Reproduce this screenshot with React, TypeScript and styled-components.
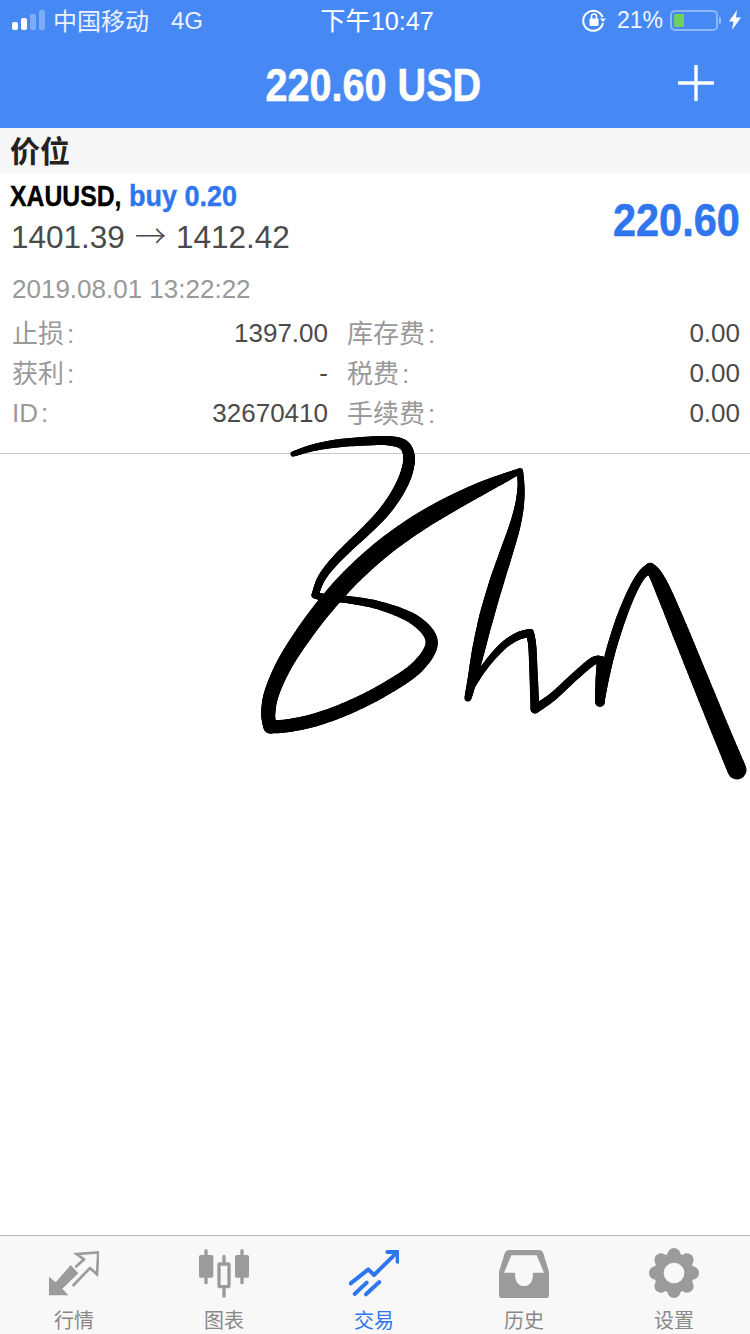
import React from "react";
import styled, { createGlobalStyle } from "styled-components";

const Global = createGlobalStyle`
  html, body { margin: 0; padding: 0; background: #fff; }
  body { font-family: "Liberation Sans", "Noto Sans CJK SC", sans-serif; }
`;
const Page = styled.div`
  position: relative; width: 750px; height: 1334px; overflow: hidden;
  display: flex; flex-direction: column; background: #fff;
`;
const Header = styled.header`
  background: #4689f5; color: #fff; height: 128px; display: flex; flex-direction: column; flex: none;
`;
const StatusBar = styled.div`
  height: 40px; display: grid; grid-template-columns: 1fr auto 1fr; align-items: center;
  padding: 0 9px 0 12px; font-size: 24px; box-sizing: border-box;
`;
const StatusLeft = styled.div`display: flex; align-items: center; gap: 8px; color: #eaf2ff;`;
const StatusRight = styled.div`display: flex; align-items: center; justify-content: flex-end; color: #f2f6ff;`;
const Time = styled.div`margin-right: -1px; font-size: 25.2px; padding-bottom: 2px;`;
const Signal = styled.div`display: flex; align-items: flex-end; gap: 3px; height: 20px;`;
const Bar = styled.i<{ $h: number; $on?: boolean }>`
  display: block; width: 6px; height: ${p => p.$h}px; border-radius: 2px;
  background: ${p => (p.$on ? "#fff" : "rgba(255,255,255,.3)")};
`;
const Carrier = styled.span`margin-right: 14px; padding-bottom: 1px;`;
const NetworkType = styled.span`padding-top: 2px;`;
const Percent = styled.span`font-size: 23px; margin: 0 8px 0 11px; padding-top: 1px;`;
const Battery = styled.div`
  width: 48px; height: 21px; border: 2px solid rgba(255,255,255,.4); border-radius: 5px;
  box-sizing: border-box; padding: 2px; position: relative; margin: 0 11px 0 -1px;
  &::after { content: ""; position: absolute; right: -5px; top: 5px; width: 2px; height: 7px; background: rgba(255,255,255,.45); border-radius: 0 2px 2px 0; }
`;
const BatteryFill = styled.div`width: 10px; height: 100%; background: #6fd15b; border-radius: 1px;`;
const NavBar = styled.div`
  flex: 1; display: flex; align-items: center; justify-content: center; position: relative; padding: 2px 4px 0 0;
`;
const Title = styled.div`
  font-size: 46px; font-weight: 700; transform: scaleX(.861); white-space: nowrap; -webkit-text-stroke: .6px #fff;
`;
const PlusIcon = styled.svg`position: absolute; right: 36px; top: 25px;`;
const SectionBar = styled.div`
  height: 45px; flex: none; background: #f6f6f6; display: flex; align-items: center; padding: 0 0 4px 10px;
  box-sizing: border-box; font-size: 30px; font-weight: 700; color: #222;
`;
const Position = styled.section`
  height: 281px; flex: none; box-sizing: border-box; border-bottom: 1px solid #c9c9c9; padding: 0 10px 0 12px;
  display: flex; flex-direction: column;
`;
const Top = styled.div`display: flex; justify-content: space-between;`;
const SymbolLine = styled.div`
  font-size: 30px; font-weight: 700; height: 44px; line-height: 45px; margin-left: -2px; white-space: nowrap;
  -webkit-text-stroke: .4px currentColor;
`;
const SymbolName = styled.span`
  display: inline-block; color: #000; transform: scaleX(.825); transform-origin: left center; margin-right: -24px;
`;
const Buy = styled.span`
  display: inline-block; color: #2f76ee; transform: scaleX(.9); transform-origin: left center;
`;
const Prices = styled.div`font-size: 31.5px; color: #4a4a4a; height: 40px; line-height: 40px; margin-left: -1px; white-space: nowrap;`;
const Arrow = styled.span`font-family: "Noto Sans CJK SC", sans-serif; font-weight: 300; line-height: 1; margin: 0 1px;`;
const Profit = styled.div`
  font-size: 46px; font-weight: 700; color: #2f76ee; transform: scaleX(.9); transform-origin: right center;
  line-height: 50px; margin-top: 22px; -webkit-text-stroke: .6px #2f76ee;
`;
const DateText = styled.div`font-size: 26px; color: #999; margin-top: 12px; height: 40px; line-height: 40px;`;
const Grid = styled.div`
  display: grid; grid-template-columns: 316px 1fr; grid-auto-rows: 40px; margin-top: 4px; align-items: center;
`;
const Pair = styled.div<{ $right?: boolean }>`
  display: flex; justify-content: space-between; align-items: center; font-size: 26px;
  ${p => (p.$right ? "margin-left: 19px;" : "")}
`;
const Label = styled.span<{ $latin?: boolean }>`
  color: #999; padding-bottom: ${p => (p.$latin ? 0 : 4)}px;
`;
const Colon = styled.span`margin-left: 3px;`;
const Value = styled.span`color: #4a4a4a;`;
const Spacer = styled.div`flex: 1;`;
const TabBar = styled.nav`
  height: 99px; flex: none; box-sizing: border-box; border-top: 1px solid #b4b4b4; background: #f8f8f8;
  display: grid; grid-template-columns: repeat(5, 150px); padding-top: 12px;
`;
const Tab = styled.div<{ $active?: boolean }>`
  display: flex; flex-direction: column; align-items: center; font-size: 20px; line-height: 24px; padding-right: 2px;
  color: ${p => (p.$active ? "#2f76ee" : "#888")};
`;
const TabIcon = styled.svg`display: block; width: 50px; height: 50px; margin-bottom: 11px;`;
const Signature = styled.svg`position: absolute; left: 0; top: 0; pointer-events: none;`;

type P = [number, number, number];
const strokes: P[][] = [
  [[293,454,5],[312,447,7],[335,443,8],[365,441,9],[392,440,9],[406,442,10],[411,456,12],[408,473,12],[398,493,12],[385,513,11],[366,531,10],[350,545,9],[332,564,9],[319,578,8],[315,595,7]],
  [[315,595,7],[322,599,7],[345,598,7],[383,604,8],[417,619,11],[445,640,12],[420,669,13],[383,691,13],[350,708,13],[317,721,13],[285,727,13],[270,727,13]],
  [[270,727,13],[267,715,14],[269,697,15],[282,663,16],[307,630,17],[327,602,18],[350,577,18],[383,546,18],[417,523,18],[450,504,17],[483,487,14],[507,477,9],[520,471,5]],
  [[520,471,6],[522,485,6],[520,505,9],[516,525,11],[507,550,13],[496,583,15],[486,617,15],[478,650,14],[472,683,9],[468,698,7]],
  [[469,692,5],[482,667,7],[505,642,7],[518,635,8],[530,633,8]],
  [[530,633,8],[533,640,8],[533,670,8],[535,709,9]],
  [[535,709,9],[550,702,8],[577,673,8],[597,656,8],[601,660,8]],
  [[601,660,8],[600,680,10],[600,702,10]],
  [[600,702,9],[604,680,9],[610,650,10],[621,617,10],[633,588,9],[642,572,8],[650,568,10]],
  [[650,568,10],[656,574,13],[662,587,16],[680,631,17],[700,680,18],[718,725,18],[737,770,19]],
];

function smooth(points: P[], times: number): P[] {
  let cur = points;
  for (let n = 0; n < times; n++) {
    cur = cur.map((p, i) => {
      if (i === 0 || i === cur.length - 1) return p;
      const a = cur[i - 1], b = cur[i + 1];
      return [
        a[0] * 0.25 + p[0] * 0.5 + b[0] * 0.25,
        a[1] * 0.25 + p[1] * 0.5 + b[1] * 0.25,
        a[2] * 0.25 + p[2] * 0.5 + b[2] * 0.25,
      ] as P;
    });
  }
  return cur;
}

function segments(input: P[]) {
  const points = smooth(input, 1);
  const out: { x1: number; y1: number; x2: number; y2: number; w: number }[] = [];
  const n = 10;
  for (let i = 0; i < points.length - 1; i++) {
    const p0 = points[Math.max(i - 1, 0)], p1 = points[i], p2 = points[i + 1], p3 = points[Math.min(i + 2, points.length - 1)];
    let px = p1[0], py = p1[1];
    for (let k = 1; k <= n; k++) {
      const t = k / n, t2 = t * t, t3 = t2 * t;
      const f = (a: number, b: number, c: number, d: number) =>
        0.5 * (2 * b + (c - a) * t + (2 * a - 5 * b + 4 * c - d) * t2 + (3 * b - a - 3 * c + d) * t3);
      const x = f(p0[0], p1[0], p2[0], p3[0]), y = f(p0[1], p1[1], p2[1], p3[1]);
      out.push({ x1: px, y1: py, x2: x, y2: y, w: p1[2] + (p2[2] - p1[2]) * t });
      px = x; py = y;
    }
  }
  return out;
}

const gray = "#9b9b9b";
const blue = "#2f76ee";

const MarketIcon = () => (
  <TabIcon viewBox="147 54 150 150">
    <path fill={gray} d="M147 140L147 196L205 196L187 176L235 130L212 105L167 157Z" />
    <path fill="none" stroke={gray} strokeWidth="8" d="M226 112L252 88L230 72L295 67L291 133L270 114L218 168" />
  </TabIcon>
);
const ChartIcon = () => (
  <TabIcon viewBox="597 54 150 150">
    <g fill={gray}>
      <rect x="613" y="58" width="10" height="105" rx="4" />
      <rect x="597" y="75" width="43" height="68" rx="5" />
      <rect x="721" y="58" width="10" height="105" rx="4" />
      <rect x="705" y="75" width="42" height="68" rx="5" />
      <rect x="667" y="75" width="10" height="128" rx="4" />
    </g>
    <rect x="657" y="102" width="30" height="68" rx="2" fill="#f8f8f8" stroke={gray} strokeWidth="10" />
  </TabIcon>
);
const TradeIcon = () => (
  <TabIcon viewBox="147 54 150 150">
    <g fill="none" stroke={blue} strokeWidth="12" strokeLinecap="round" strokeLinejoin="round">
      <path d="M152 160L205 118L222 135L288 70" />
      <path d="M262 66L293 66L293 95" />
      <path d="M164 192L200 158" />
      <path d="M198 193L238 156" />
    </g>
  </TabIcon>
);
const HistoryIcon = () => (
  <TabIcon viewBox="597 54 150 150">
    <path fill={gray} fillRule="evenodd" d="M628 60H716Q726 60 730 70L747 125V195Q747 205 737 205H607Q597 205 597 195V125L614 70Q618 60 628 60ZM634 76L612 128H645Q645 168 672 168Q699 168 699 128H732L710 76Z" />
  </TabIcon>
);
const SettingsIcon = () => (
  <TabIcon viewBox="0 0 150 150">
    <g fill={gray}>
      <circle cx="75" cy="75" r="60" />
      {[0, 45, 90, 135, 180, 225, 270, 315].map(a => (
        <circle key={a} cx={75 + 55 * Math.cos((a * Math.PI) / 180)} cy={75 + 55 * Math.sin((a * Math.PI) / 180)} r="20" />
      ))}
    </g>
    <circle cx="75" cy="75" r="31" fill="#f8f8f8" />
  </TabIcon>
);

const rows: [[string, string], [string, string]][] = [
  [["止损", "1397.00"], ["库存费", "0.00"]],
  [["获利", "-"], ["税费", "0.00"]],
  [["ID", "32670410"], ["手续费", "0.00"]],
];
const tabs = [
  { label: "行情", icon: <MarketIcon /> },
  { label: "图表", icon: <ChartIcon /> },
  { label: "交易", icon: <TradeIcon />, active: true },
  { label: "历史", icon: <HistoryIcon /> },
  { label: "设置", icon: <SettingsIcon /> },
];

export default function App() {
  return (
    <Page>
      <Global />
      <Header>
        <StatusBar>
          <StatusLeft>
            <Signal>
              <Bar $h={8} $on /><Bar $h={12} $on /><Bar $h={16} /><Bar $h={20} />
            </Signal>
            <Carrier>中国移动</Carrier>
            <NetworkType>4G</NetworkType>
          </StatusLeft>
          <Time>下午10:47</Time>
          <StatusRight>
            <svg width="24" height="24" viewBox="0 0 24 24" fill="none">
              <path d="M20.5 9A10 10 0 1 0 21 15" stroke="#fff" strokeWidth="2" />
              <path d="M18 10.5h6l-3 3.5z" fill="#fff" />
              <rect x="7.5" y="10.5" width="9" height="7.5" rx="1" fill="#fff" />
              <path d="M9.5 11V8.5a2.5 2.5 0 0 1 5 0V11" stroke="#fff" strokeWidth="1.6" />
            </svg>
            <Percent>21%</Percent>
            <Battery><BatteryFill /></Battery>
            <svg width="12" height="20" viewBox="0 0 12 20"><path d="M8 0L0 11.5H4.5L3 20L12 7.5H7Z" fill="#fff" /></svg>
          </StatusRight>
        </StatusBar>
        <NavBar>
          <Title>220.60 USD</Title>
          <PlusIcon width="36" height="36" viewBox="0 0 36 36">
            <path d="M18 0V36M0 18H36" stroke="#fff" strokeWidth="3.4" />
          </PlusIcon>
        </NavBar>
      </Header>
      <SectionBar>价位</SectionBar>
      <Position>
        <Top>
          <div>
            <SymbolLine><SymbolName>XAUUSD,</SymbolName> <Buy>buy 0.20</Buy></SymbolLine>
            <Prices>1401.39 <Arrow>→</Arrow> 1412.42</Prices>
          </div>
          <Profit>220.60</Profit>
        </Top>
        <DateText>2019.08.01 13:22:22</DateText>
        <Grid>
          {rows.map(([l, r]) => (
            <React.Fragment key={l[0]}>
              <Pair><Label $latin={l[0] === "ID"}>{l[0]}<Colon>:</Colon></Label><Value>{l[1]}</Value></Pair>
              <Pair $right><Label>{r[0]}<Colon>:</Colon></Label><Value>{r[1]}</Value></Pair>
            </React.Fragment>
          ))}
        </Grid>
      </Position>
      <Spacer />
      <TabBar>
        {tabs.map(t => (
          <Tab key={t.label} $active={t.active}>{t.icon}{t.label}</Tab>
        ))}
      </TabBar>
      <Signature width="750" height="1334" viewBox="0 0 750 1334">
        <g stroke="#000" strokeLinecap="round" fill="none">
          {strokes.flatMap((s, i) =>
            segments(s).map((g, j) => (
              <line key={`${i}-${j}`} x1={g.x1} y1={g.y1} x2={g.x2} y2={g.y2} strokeWidth={g.w} />
            ))
          )}
        </g>
      </Signature>
    </Page>
  );
}
